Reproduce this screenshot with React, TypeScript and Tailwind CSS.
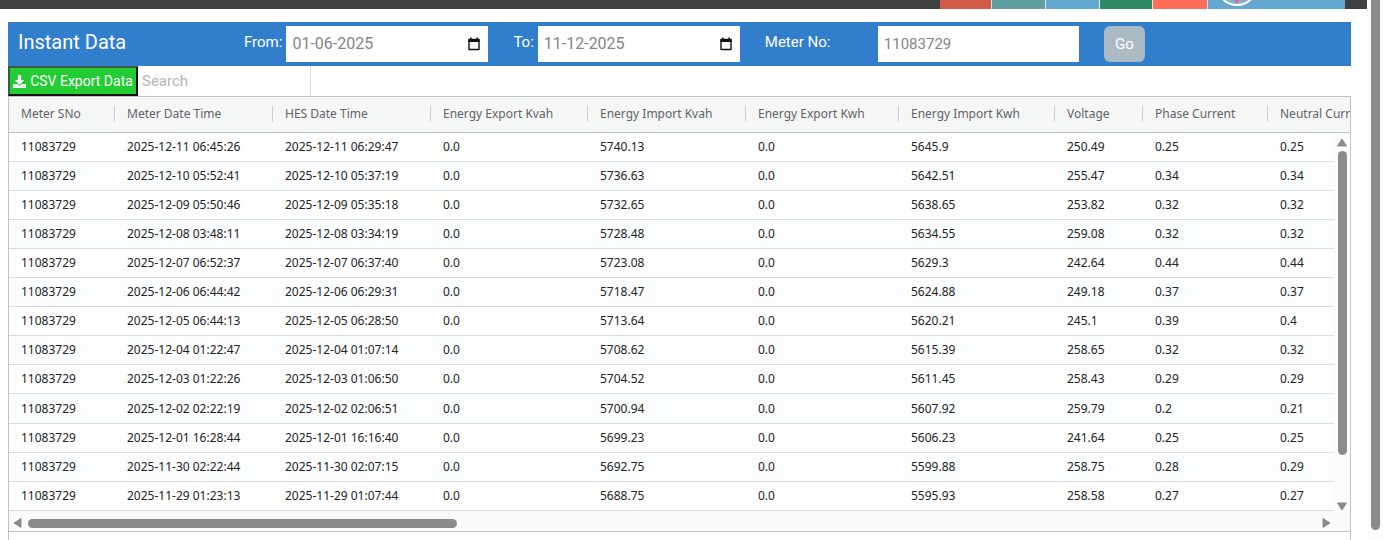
import React from 'react';
import { FaDownload } from 'react-icons/fa';

interface Reading {
  meterTime: string;
  hesTime: string;
  importKvah: string;
  importKwh: string;
  voltage: string;
  phaseCurrent: string;
  neutralCurrent: string;
}

interface DateFieldProps {
  id: string;
  label: string;
  value: string;
}

const METER_NO = '11083729';

const columns = [
  { title: 'Meter SNo', width: 'w-[106px]' },
  { title: 'Meter Date Time', width: 'w-[158px]' },
  { title: 'HES Date Time', width: 'w-[158px]' },
  { title: 'Energy Export Kvah', width: 'w-[157px]' },
  { title: 'Energy Import Kvah', width: 'w-[158px]' },
  { title: 'Energy Export Kwh', width: 'w-[153px]' },
  { title: 'Energy Import Kwh', width: 'w-[156px]' },
  { title: 'Voltage', width: 'w-[88px]' },
  { title: 'Phase Current', width: 'w-[125px]' },
  { title: 'Neutral Current', width: 'w-[140px]' },
];

const toReading = (r: string[]): Reading => ({
  meterTime: r[0],
  hesTime: r[1],
  importKvah: r[2],
  importKwh: r[3],
  voltage: r[4],
  phaseCurrent: r[5],
  neutralCurrent: r[6],
});

const readings: Reading[] = [
  ['2025-12-11 06:45:26', '2025-12-11 06:29:47', '5740.13', '5645.9', '250.49', '0.25', '0.25'],
  ['2025-12-10 05:52:41', '2025-12-10 05:37:19', '5736.63', '5642.51', '255.47', '0.34', '0.34'],
  ['2025-12-09 05:50:46', '2025-12-09 05:35:18', '5732.65', '5638.65', '253.82', '0.32', '0.32'],
  ['2025-12-08 03:48:11', '2025-12-08 03:34:19', '5728.48', '5634.55', '259.08', '0.32', '0.32'],
  ['2025-12-07 06:52:37', '2025-12-07 06:37:40', '5723.08', '5629.3', '242.64', '0.44', '0.44'],
  ['2025-12-06 06:44:42', '2025-12-06 06:29:31', '5718.47', '5624.88', '249.18', '0.37', '0.37'],
  ['2025-12-05 06:44:13', '2025-12-05 06:28:50', '5713.64', '5620.21', '245.1', '0.39', '0.4'],
  ['2025-12-04 01:22:47', '2025-12-04 01:07:14', '5708.62', '5615.39', '258.65', '0.32', '0.32'],
  ['2025-12-03 01:22:26', '2025-12-03 01:06:50', '5704.52', '5611.45', '258.43', '0.29', '0.29'],
  ['2025-12-02 02:22:19', '2025-12-02 02:06:51', '5700.94', '5607.92', '259.79', '0.2', '0.21'],
  ['2025-12-01 16:28:44', '2025-12-01 16:16:40', '5699.23', '5606.23', '241.64', '0.25', '0.25'],
  ['2025-11-30 02:22:44', '2025-11-30 02:07:15', '5692.75', '5599.88', '258.75', '0.28', '0.29'],
  ['2025-11-29 01:23:13', '2025-11-29 01:07:44', '5688.75', '5595.93', '258.58', '0.27', '0.27'],
].map(toReading);

const Arrow = ({ points }: { points: string }) => (
  <svg width="10" height="10" viewBox="0 0 10 10" className="shrink-0">
    <polygon points={points} fill="#8b8b8b" stroke="#8b8b8b" strokeLinejoin="round" />
  </svg>
);

const CalendarIcon = () => (
  <svg width="12" height="14" viewBox="0 0 12 14">
    <path
      d="M1 2.5h10v10H1z"
      fill="none"
      stroke="#111"
      strokeWidth="1.4"
      strokeLinejoin="round"
    />
    <path d="M.5 2h11v3H.5zM2 .5h1.6V3H2zM8.4.5H10V3H8.4z" fill="#111" />
  </svg>
);

const TopBar = () => (
  <header className="flex h-[9px] shrink-0 justify-end overflow-hidden bg-[#404040] pr-[22px]">
    <div className="flex gap-px bg-[#e6e6e6]">
      <div className="w-[51px] bg-[#d15b47]" />
      <div className="w-[53px] bg-[#5f9f9f]" />
      <div className="w-[53px] bg-[#62a8d1]" />
      <div className="w-[52px] bg-[#2e8b62]" />
      <div className="w-[54px] bg-[#ff6c57]" />
      <div className="flex w-[137px] items-end bg-[#62a8d1] pb-[3px] pl-2">
        <svg width="42" height="42" viewBox="0 0 42 42" className="shrink-0">
          <circle cx="21" cy="21" r="20" fill="#8ea9cf" stroke="#fff" strokeWidth="2" />
          <path d="M18 35l3 4 4-4z" fill="#c9708f" />
        </svg>
      </div>
    </div>
  </header>
);

const DateField = ({ id, label, value }: DateFieldProps) => (
  <div className="flex items-center gap-1">
    <label htmlFor={id} className="pb-1 text-[15px] text-white">{label}</label>
    <div className="flex h-9 w-[202px] items-center bg-white pr-2">
      <input
        id={id}
        type="text"
        defaultValue={value}
        className="min-w-0 flex-1 bg-transparent pl-1.5 text-base text-[#858585] outline-none"
      />
      <button type="button" aria-label={`Pick date, ${label}`}>
        <CalendarIcon />
      </button>
    </div>
  </div>
);

const FilterBar = () => (
  <form className="flex h-11 items-center bg-[#307ecc]">
    <h1 className="w-[236px] shrink-0 pb-1 pl-2.5 text-xl text-white">Instant Data</h1>
    <DateField id="from" label="From:" value="01-06-2025" />
    <div className="w-[25px] shrink-0" />
    <DateField id="to" label="To:" value="11-12-2025" />
    <label htmlFor="meter" className="ml-[25px] w-[113px] shrink-0 pb-1 text-[15px] text-white">
      Meter No:
    </label>
    <input
      id="meter"
      type="text"
      defaultValue={METER_NO}
      className="h-9 w-[201px] bg-white px-1.5 text-[15px] text-[#858585] outline-none"
    />
    <button type="button" className="ml-[25px] h-9 w-[41px] rounded-md bg-[#abbac3] text-[15px] text-white">
      Go
    </button>
  </form>
);

const Toolbar = () => (
  <div className="flex h-[30px]">
    <button
      type="button"
      className="flex w-[130px] items-center justify-center gap-1 border-2 border-t-[#3b5a3b] border-l-[#3b5a3b] border-r-[#111] border-b-[#111] bg-[#22cc33] text-sm whitespace-nowrap text-white"
    >
      <FaDownload size={13} />
      CSV Export Data
    </button>
    <input
      type="search"
      aria-label="Search"
      placeholder="Search"
      className="w-[173px] border-r border-[#dcdcdc] px-1 text-[15px] outline-none placeholder:text-[#b5b5b5]"
    />
  </div>
);

const ReadingsTable = () => (
  <div className="relative overflow-hidden">
    <table className="h-[414px] w-[1399px] table-fixed border-collapse text-left font-['Noto_Sans',sans-serif] text-xs">
      <thead>
        <tr className="h-[35px] border-b border-[#bdc3c7] bg-[#f5f7f7] text-[#5f6366]">
          {columns.map((col) => (
            <th key={col.title} className={`${col.width} p-0 font-normal whitespace-nowrap`}>
              <div className="flex h-4 items-center justify-between pl-3">
                {col.title}
                <span className="h-4 w-px bg-[#c9ced1]" />
              </div>
            </th>
          ))}
        </tr>
      </thead>
      <tbody className="text-[#222]">
        {readings.map((r) => (
          <tr key={r.meterTime} className="border-b border-[#d9dcde] even:bg-[#fcfdfe]">
            <td className="px-3 py-0">{METER_NO}</td>
            <td className="px-3 py-0">{r.meterTime}</td>
            <td className="px-3 py-0">{r.hesTime}</td>
            <td className="px-3 py-0">0.0</td>
            <td className="px-3 py-0">{r.importKvah}</td>
            <td className="px-3 py-0">0.0</td>
            <td className="px-3 py-0">{r.importKwh}</td>
            <td className="px-3 py-0">{r.voltage}</td>
            <td className="px-3 py-0">{r.phaseCurrent}</td>
            <td className="px-3 py-0">{r.neutralCurrent}</td>
          </tr>
        ))}
      </tbody>
    </table>
    <div className="absolute top-9 right-0 bottom-0 flex w-4 flex-col items-center bg-[#fcfcfc] pt-1">
      <Arrow points="5,2 9.5,9 0.5,9" />
      <div className="mt-1 h-[304px] w-[9px] rounded-full bg-[#8b8b8b]" />
      <div className="mt-auto">
        <Arrow points="0.5,2 9.5,2 5,9" />
      </div>
    </div>
  </div>
);

const App = () => {
  return (
    <div className="flex h-screen overflow-hidden bg-white font-['Roboto',sans-serif]">
      <div className="flex min-w-0 flex-1 flex-col">
        <TopBar />
        <main className="flex min-h-0 flex-1 flex-col pt-[13px] pr-4 pl-2">
          <FilterBar />
          <Toolbar />
          <section className="flex-1 border border-b-0 border-[#bdc3c7]">
            <ReadingsTable />
            <div className="flex h-[21px] items-center border-b border-[#bdc3c7] bg-[#fafafa] pt-1 pr-[18px] pl-[3px]">
              <Arrow points="9,0.5 9,9.5 2,5" />
              <div className="ml-1.5 h-[9px] w-[429px] rounded-full bg-[#8b8b8b]" />
              <div className="ml-auto">
                <Arrow points="1,0.5 1,9.5 8,5" />
              </div>
            </div>
          </section>
        </main>
      </div>
      <div className="flex w-4 shrink-0 justify-center bg-[#fcfcfc] pb-[10px]">
        <div className="w-[9px] rounded-b-full bg-[#8b8b8b]" />
      </div>
    </div>
  );
};

export default App;
